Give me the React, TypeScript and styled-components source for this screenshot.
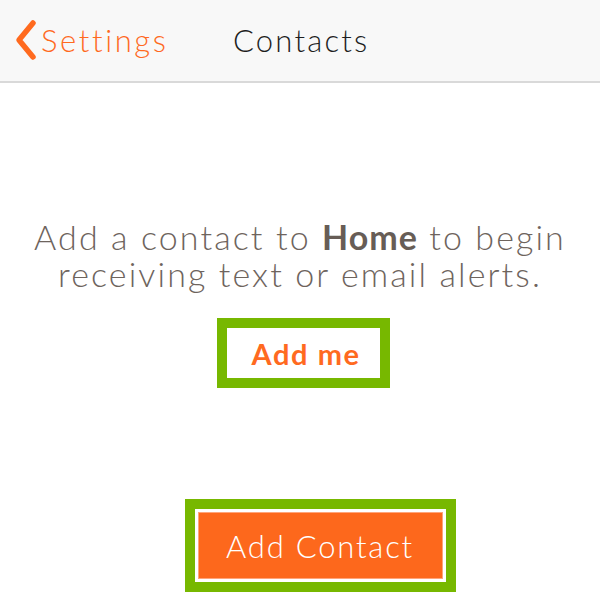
import { createGlobalStyle, styled } from 'styled-components';

const GlobalStyle = createGlobalStyle`
  html, body {
    margin: 0;
    padding: 0;
    background: #ffffff;
  }
  body {
    font-family: 'Lato', 'Open Sans', sans-serif;
  }
`;

const BackIcon = () => (
  <svg width="24" height="42" viewBox="0 0 24 42" fill="none">
    <path d="M19 4 L5 21 L19 38" stroke="#ff6a1f" strokeWidth="5.5" strokeLinecap="round" strokeLinejoin="round" />
  </svg>
);

const App = () => {
  return (
    <Screen>
      <GlobalStyle />
      <NavBar>
        <BackButton type="button">
          <BackIcon />
          <span>Settings</span>
        </BackButton>
        <Title>Contacts</Title>
      </NavBar>
      <Body>
        <Message>
          <Line>
            Add a contact to <strong>Home</strong> to begin
          </Line>
          <Line>receiving text or email alerts.</Line>
        </Message>
        <Highlight $shift={6}>
          <LinkButton type="button">Add me</LinkButton>
        </Highlight>
        <Highlight $gap $shift={40}>
          <PrimaryButton type="button">Add Contact</PrimaryButton>
        </Highlight>
      </Body>
    </Screen>
  );
};

export default App;

const Screen = styled.div`
  width: 600px;
  height: 609px;
  display: flex;
  flex-direction: column;
  overflow: hidden;
`;

const NavBar = styled.div`
  box-sizing: border-box;
  height: 83px;
  background-color: #f8f8f8;
  border-bottom: 2px solid #d9d9d9;
  display: flex;
  align-items: center;
  padding: 0 0 2px 14px;
`;

const BackButton = styled.button`
  display: flex;
  align-items: center;
  gap: 3px;
  border: none;
  background: none;
  padding: 0;
  font-family: inherit;
  font-size: 31px;
  font-weight: 300;
  letter-spacing: 2.6px;
  color: #ff6a1f;
  width: 219px;
`;

const Title = styled.div`
  font-size: 31px;
  font-weight: 300;
  letter-spacing: 2.2px;
  color: #1e1e1e;
`;

const Body = styled.div`
  display: flex;
  flex-direction: column;
  align-items: center;
  padding-top: 135px;
`;

const Message = styled.div`
  display: flex;
  flex-direction: column;
  align-items: center;
  font-size: 34px;
  font-weight: 300;
  color: #6e645d;
  letter-spacing: 2.1px;

  & strong {
    font-weight: 700;
    letter-spacing: 1px;
    color: #675d56;
  }
`;

const Line = styled.div`
  height: 37px;
  line-height: 37px;
  white-space: nowrap;
`;

const Highlight = styled.div<{ $gap?: boolean; $shift: number }>`
  border: 10px solid #77b800;
  background: #ffffff;
  padding: ${(p) => (p.$gap ? '3px' : '0')};
  margin-top: ${(p) => (p.$gap ? '111px' : '26px')};
  margin-left: ${(p) => p.$shift}px;
`;

const LinkButton = styled.button`
  border: none;
  background: #ffffff;
  padding: 0 0 0 25px;
  height: 50px;
  width: 153px;
  font-family: inherit;
  font-size: 29px;
  font-weight: 700;
  letter-spacing: 1.6px;
  color: #ff6a1f;
  text-align: left;
`;

const PrimaryButton = styled.button`
  border: 1px solid #ffa57a;
  background-color: #fd681c;
  width: 245px;
  height: 67px;
  font-family: inherit;
  font-size: 31px;
  font-weight: 300;
  letter-spacing: 1.8px;
  color: #ffffff;
`;
